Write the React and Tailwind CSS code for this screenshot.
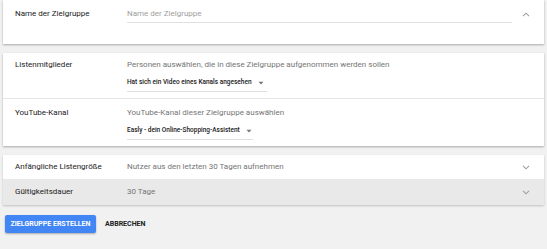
import React from 'react';

const font = { fontFamily: 'Roboto, "Noto Sans", sans-serif' };

function ChevronUp() {
  return (
    <svg width="8" height="5" viewBox="0 0 8 5" className="block">
      <path d="M1 4.2 L4 1.2 L7 4.2" fill="none" stroke="#9e9e9e" strokeWidth="1.1" />
    </svg>
  );
}

function ChevronDown() {
  return (
    <svg width="8" height="5" viewBox="0 0 8 5" className="block">
      <path d="M1 0.8 L4 3.8 L7 0.8" fill="none" stroke="#9e9e9e" strokeWidth="1.1" />
    </svg>
  );
}

function Caret() {
  return (
    <svg width="6" height="4" viewBox="0 0 6 4" className="block shrink-0">
      <path d="M0.5 0.8 L5.5 0.8 L3 3.4 Z" fill="#757575" />
    </svg>
  );
}

function Dropdown({ text, width }) {
  return (
    <div className={`mt-[8px] flex items-center gap-[6px] border-b border-[#e0e0e0] pb-[4px] ${width}`}>
      <span className="whitespace-nowrap text-[6.5px] leading-[9px] font-medium text-[#212121]">{text}</span>
      <Caret />
    </div>
  );
}

export default function App() {
  return (
    <div className="h-[249px] w-full bg-[#f1f1f1] px-[3px] overflow-hidden" style={font}>
      {/* Name */}
      <div className="h-[44px] bg-white shadow-[0_1px_2px_rgba(0,0,0,0.3)] flex items-start pt-[9px] pl-[12px] pr-[14px]">
        <div className="w-[112px] text-[8px] leading-[10px] text-[#212121]">Name der Zielgruppe</div>
        <div className="flex-1 border-b border-[#e0e0e0] pb-[3px] text-[8px] leading-[10px] text-[#9e9e9e]">
          Name der Zielgruppe
        </div>
        <div className="w-[18px] flex justify-end pt-[3px]">
          <ChevronUp />
        </div>
      </div>

      {/* Liste */}
      <div className="mt-[9px] bg-white shadow-[0_1px_2px_rgba(0,0,0,0.3)]">
        <div className="h-[46px] flex items-start pt-[7px] pl-[12px] border-b border-[#e6e6e6]">
          <div className="w-[112px] text-[8px] leading-[10px] text-[#212121]">Listenmitglieder</div>
          <div>
            <div className="text-[8px] leading-[10px] text-[#757575]">
              Personen auswählen, die in diese Zielgruppe aufgenommen werden sollen
            </div>
            <Dropdown text="Hat sich ein Video eines Kanals angesehen" width="w-[140px]" />
          </div>
        </div>
        <div className="h-[47px] flex items-start pt-[9px] pl-[12px]">
          <div className="w-[112px] text-[8px] leading-[10px] text-[#212121]">YouTube-Kanal</div>
          <div>
            <div className="text-[8px] leading-[10px] text-[#757575]">
              YouTube-Kanal dieser Zielgruppe auswählen
            </div>
            <Dropdown text="Easly - dein Online-Shopping-Assistent" width="w-[126px]" />
          </div>
        </div>
      </div>

      {/* Optionen */}
      <div className="mt-[9px] bg-white shadow-[0_1px_2px_rgba(0,0,0,0.2)]">
        <div className="h-[24px] flex items-center pl-[12px] pr-[14px]">
          <div className="w-[112px] text-[8px] leading-[10px] text-[#212121]">Anfängliche Listengröße</div>
          <div className="flex-1 text-[8px] leading-[10px] text-[#757575]">Nutzer aus den letzten 30 Tagen aufnehmen</div>
          <ChevronDown />
        </div>
        <div className="h-[26px] flex items-center pl-[12px] pr-[14px] bg-[#e9e9e9]">
          <div className="w-[112px] text-[8px] leading-[10px] text-[#212121]">Gültigkeitsdauer</div>
          <div className="flex-1 text-[8px] leading-[10px] text-[#757575]">30 Tage</div>
          <ChevronDown />
        </div>
      </div>

      {/* Buttons */}
      <div className="mt-[10px] flex items-center gap-[9px] pl-[2px]">
        <button className="h-[18px] w-[91px] rounded-[2px] bg-[#4285f4] text-white text-[7px] font-bold shadow-[0_1px_2px_rgba(0,0,0,0.3)]">
          ZIELGRUPPE ERSTELLEN
        </button>
        <button className="text-[7px] font-bold text-[#212121]">ABBRECHEN</button>
      </div>
    </div>
  );
}
